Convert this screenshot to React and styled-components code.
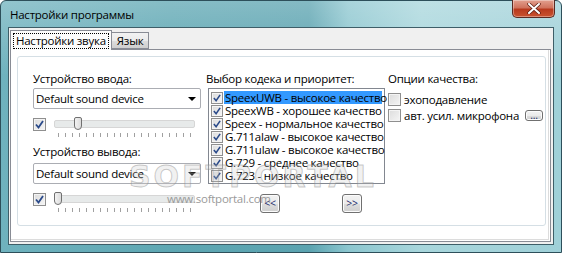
import React from "react";
import styled, { createGlobalStyle } from "styled-components";

const Global = createGlobalStyle`
  html, body { margin: 0; padding: 0; overflow: hidden; background: #fff; }
  * { box-sizing: border-box; }
`;

const FONT = `"Segoe UI", "Open Sans", "Noto Sans", sans-serif`;

const Window = styled.div`
  position: relative;
  width: 562px;
  height: 253px;
  display: flex;
  flex-direction: column;
  padding: 0 7px 7px 7px;
  font-family: ${FONT};
  font-size: 10.5px;
  letter-spacing: -0.25px;
  color: #000;
  border: 1px solid #2d4f5a;
  border-radius: 6px 6px 0 0;
  background:
    linear-gradient(180deg, rgba(255,255,255,0.25) 0%, rgba(255,255,255,0) 30%),
    linear-gradient(90deg, #6fb2be 0%, #5ea7b3 30%, #5ba3b0 55%, #8cc6cf 62%, #a8d6dc 75%, #9fd0d8 100%);
`;

const TitleBar = styled.div`
  height: 26px;
  display: flex;
  align-items: center;
  padding-left: 2px;
  font-size: 11.5px;
  color: #000;
`;

const CloseBtn = styled.div`
  position: absolute;
  top: -1px;
  right: 6px;
  width: 43px;
  height: 18px;
  border: 1px solid #5a2a22;
  border-top: none;
  border-radius: 0 0 5px 5px;
  background: linear-gradient(180deg, #e2a08f 0%, #d0735d 45%, #b83a1e 55%, #c9532f 100%);
  display: flex;
  align-items: center;
  justify-content: center;
  box-shadow: inset 0 0 0 1px rgba(255,255,255,0.35);
`;

const Client = styled.div`
  flex: 1;
  display: flex;
  flex-direction: column;
  background: #f0f0f0;
  border: 1px solid #3e5e68;
  padding: 2px 2px 2px 1px;
`;

const TabStrip = styled.div`
  display: flex;
  align-items: flex-end;
  height: 19px;
  position: relative;
  z-index: 1;
`;

const Tab = styled.div`
  height: ${(p) => (p.$active ? "20px" : "17px")};
  margin-bottom: ${(p) => (p.$active ? "-1px" : "0")};
  padding: 0 ${(p) => (p.$active ? "2px" : "5px")};
  display: flex;
  align-items: center;
  border: 1px solid #898c95;
  border-bottom: ${(p) => (p.$active ? "none" : "1px solid #898c95")};
  border-left: ${(p) => (p.$active ? "1px solid #898c95" : "none")};
  background: ${(p) =>
    p.$active ? "#fcfcfc" : "linear-gradient(180deg, #f2f2f2 0%, #ebebeb 50%, #dddddd 51%, #cfcfcf 100%)"};
  font-size: 11.5px;
`;

const Focus = styled.span`
  border: 1px dotted #000;
  padding: 0 2px;
  line-height: 14px;
`;

const TabPage = styled.div`
  flex: 1;
  background: #fff;
  border: 1px solid #898c95;
  box-shadow: inset -1px -1px 0 #fff, inset -2px -2px 0 #dcdcdc;
  padding: 6px 4px 15px 6px;
  display: flex;
`;

const Group = styled.div`
  flex: 1;
  border: 1px solid #d5dfe5;
  border-radius: 3px;
  padding: 15px 0 0 15px;
  display: grid;
  grid-template-columns: 173px 182px 1fr;
`;

const Column = styled.div`
  display: flex;
  flex-direction: column;
`;

const Label = styled.div`
  font-size: 11.5px;
  line-height: 14px;
  height: 14px;
  margin-bottom: ${(p) => p.$mb ?? 4}px;
`;

const Combo = styled.div`
  width: 168px;
  height: 21px;
  border: 1px solid #abadb3;
  border-radius: 2px;
  background: #fff;
  display: flex;
  align-items: center;
  justify-content: space-between;
  padding: 0 4px 0 2px;
  font-size: 11.5px;
`;

const Arrow = styled.span`
  width: 0;
  height: 0;
  border-left: 4px solid transparent;
  border-right: 4px solid transparent;
  border-top: 4px solid #000;
`;

const SliderRow = styled.div`
  display: flex;
  align-items: flex-start;
  margin-top: 9px;
  gap: 8px;
  height: 27px;
`;

const Check = styled.span`
  width: ${(p) => p.$size || 13}px;
  height: ${(p) => p.$size || 13}px;
  flex: none;
  border: 1px solid #8f8f8f;
  background: linear-gradient(135deg, #dcdcdc 0%, #f5f5f5 100%);
  box-shadow: inset 0 0 0 1px #f4f4f4;
  display: flex;
  align-items: center;
  justify-content: center;
`;

const Slider = styled.div`
  position: relative;
  width: 141px;
  height: 24px;
`;

const Track = styled.div`
  position: absolute;
  left: 0;
  right: 0;
  top: 2px;
  height: 8px;
  border-radius: 2px;
  background: #e7eaea;
  border: 1px solid #d6d6d6;
`;

const Thumb = styled.div`
  position: absolute;
  top: -1px;
  width: 8px;
  height: 13px;
  border: 1px solid #707070;
  border-radius: 2px 2px 4px 4px;
  background: linear-gradient(90deg, #f2f2f2, #dcdcdc);
`;

const Ticks = styled.div`
  position: absolute;
  left: 4px;
  right: 4px;
  top: 15px;
  height: 4px;
  display: flex;
  justify-content: space-between;
`;

const Tick = styled.span`
  width: 1px;
  height: 4px;
  background: #a0a0a0;
`;

const List = styled.div`
  width: 177px;
  height: 96px;
  margin-left: 2px;
  border: 1px solid #828790;
  background: #fff;
  padding: 2px 0 0 2px;
  display: flex;
  flex-direction: column;
`;

const Item = styled.div`
  height: 13px;
  display: flex;
  align-items: center;
  gap: 1px;
  font-size: 11.5px;
  line-height: 13px;
`;

const ItemText = styled.span`
  padding: 0 1px;
  background: ${(p) => (p.$sel ? "#3399ff" : "transparent")};
  width: ${(p) => (p.$sel ? "158px" : "auto")};
  white-space: nowrap;
`;

const Buttons = styled.div`
  display: flex;
  justify-content: space-between;
  width: 102px;
  margin: 10px 0 0 54px;
`;

const Btn = styled.div`
  width: ${(p) => p.$w || 20}px;
  height: ${(p) => p.$h || 19}px;
  border: 1px solid #707070;
  border-radius: 3px;
  background: linear-gradient(180deg, #f2f2f2 0%, #ebebeb 50%, #dddddd 51%, #cfcfcf 100%);
  box-shadow: inset 0 0 0 1px #fcfcfc;
  display: flex;
  align-items: center;
  justify-content: center;
  font-size: 10.5px;
  line-height: 1;
  color: #1a2a6a;
`;

const OptRow = styled.div`
  display: flex;
  align-items: center;
  gap: 3px;
  height: 16px;
  font-size: 11.5px;
  white-space: nowrap;
`;

const Spacer = styled.span`
  width: ${(p) => p.$w}px;
`;

const Watermark = styled.div`
  position: absolute;
  left: 128px;
  top: 158px;
  font-family: "DejaVu Sans", sans-serif;
  font-weight: bold;
  font-size: 30px;
  letter-spacing: 3px;
  color: rgba(200, 200, 200, 0.25);
  -webkit-text-stroke: 1px rgba(140, 140, 140, 0.45);
  pointer-events: none;
`;

const WaterUrl = styled.div`
  position: absolute;
  left: 166px;
  top: 190px;
  font-family: ${FONT};
  font-size: 11.5px;
  color: #9a9a9a;
  pointer-events: none;
`;

const CheckMark = ({ size = 9 }) => (
  <svg width={size} height={size} viewBox="0 0 9 9">
    <path d="M1 4.5 L3.5 7.5 L8 1" fill="none" stroke="#2a4a8a" strokeWidth="1.8" />
  </svg>
);

const ticks = Array.from({ length: 20 });

const SliderCtl = ({ pos }) => (
  <Slider>
    <Track />
    <Thumb style={{ left: pos }} />
    <Ticks>
      {ticks.map((_, i) => (
        <Tick key={i} />
      ))}
    </Ticks>
  </Slider>
);

const codecs = [
  "SpeexUWB - высокое качество",
  "SpeexWB - хорошее качество",
  "Speex - нормальное качество",
  "G.711alaw - высокое качество",
  "G.711ulaw - высокое качество",
  "G.729 - среднее качество",
  "G.723 - низкое качество",
];

export default function App() {
  return (
    <>
      <Global />
      <Window>
        <TitleBar>Настройки программы</TitleBar>
        <CloseBtn>
          <svg width="14" height="11" viewBox="0 0 14 11">
            <path d="M2 1 L12 10 M12 1 L2 10" stroke="#5a1c10" strokeWidth="3.4" strokeLinecap="round" />
            <path d="M2 1 L12 10 M12 1 L2 10" stroke="#fff" strokeWidth="2" strokeLinecap="round" />
          </svg>
        </CloseBtn>
        <Client>
          <TabStrip>
            <Tab $active>
              <Focus>Настройки звука</Focus>
            </Tab>
            <Tab>Язык</Tab>
          </TabStrip>
          <TabPage>
            <Group>
              <Column>
                <Label $mb={2}>Устройство ввода:</Label>
                <Combo>
                  Default sound device
                  <Arrow />
                </Combo>
                <SliderRow>
                  <Check>
                    <CheckMark />
                  </Check>
                  <SliderCtl pos={20} />
                </SliderRow>
                <Label $mb={4}>Устройство вывода:</Label>
                <Combo>
                  Default sound device
                  <Arrow />
                </Combo>
                <SliderRow>
                  <Check>
                    <CheckMark />
                  </Check>
                  <SliderCtl pos={0} />
                </SliderRow>
              </Column>
              <Column>
                <Label $mb={2}>Выбор кодека и приоритет:</Label>
                <List>
                  {codecs.map((c, i) => (
                    <Item key={c}>
                      <Check $size={12}>
                        <CheckMark size={8} />
                      </Check>
                      <ItemText $sel={i === 0}>{c}</ItemText>
                    </Item>
                  ))}
                </List>
                <Buttons>
                  <Btn>&lt;&lt;</Btn>
                  <Btn>&gt;&gt;</Btn>
                </Buttons>
              </Column>
              <Column>
                <Label $mb={5}>Опции качества:</Label>
                <OptRow>
                  <Check />
                  эхоподавление
                </OptRow>
                <OptRow>
                  <Check />
                  авт. усил. микрофона
                  <Spacer $w={0} />
                  <Btn $w={18} $h={11}>...</Btn>
                </OptRow>
              </Column>
            </Group>
          </TabPage>
        </Client>
        <Watermark>SOFTPORTAL</Watermark>
        <WaterUrl>www.softportal.com</WaterUrl>
      </Window>
    </>
  );
}
